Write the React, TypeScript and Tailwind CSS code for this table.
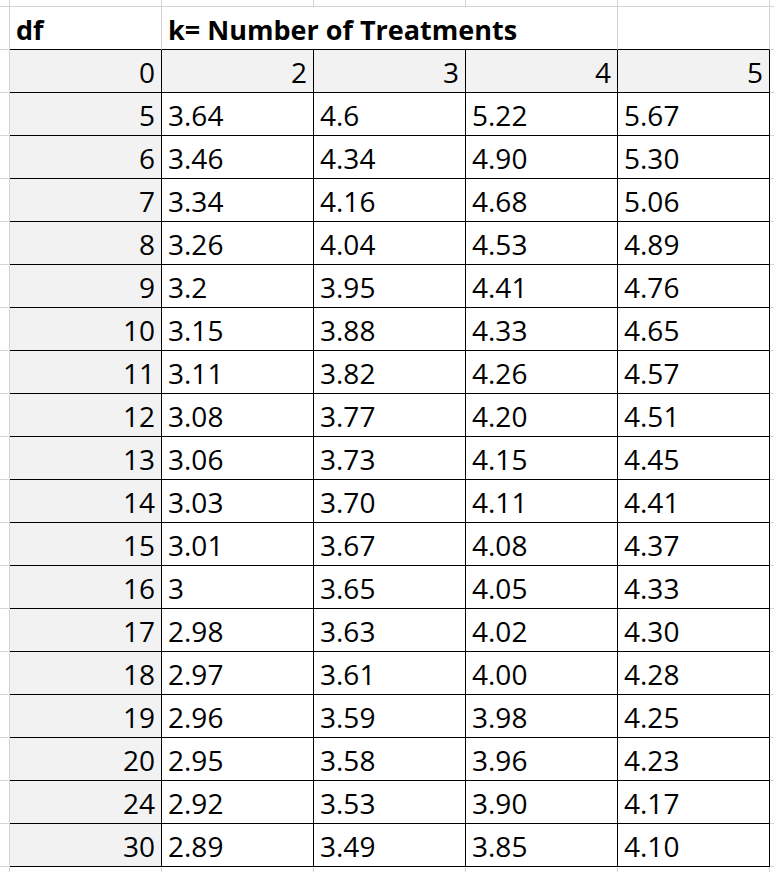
const rows: [string, string, string, string, string][] = [
  ["5", "3.64", "4.6", "5.22", "5.67"],
  ["6", "3.46", "4.34", "4.90", "5.30"],
  ["7", "3.34", "4.16", "4.68", "5.06"],
  ["8", "3.26", "4.04", "4.53", "4.89"],
  ["9", "3.2", "3.95", "4.41", "4.76"],
  ["10", "3.15", "3.88", "4.33", "4.65"],
  ["11", "3.11", "3.82", "4.26", "4.57"],
  ["12", "3.08", "3.77", "4.20", "4.51"],
  ["13", "3.06", "3.73", "4.15", "4.45"],
  ["14", "3.03", "3.70", "4.11", "4.41"],
  ["15", "3.01", "3.67", "4.08", "4.37"],
  ["16", "3", "3.65", "4.05", "4.33"],
  ["17", "2.98", "3.63", "4.02", "4.30"],
  ["18", "2.97", "3.61", "4.00", "4.28"],
  ["19", "2.96", "3.59", "3.98", "4.25"],
  ["20", "2.95", "3.58", "3.96", "4.23"],
  ["24", "2.92", "3.53", "3.90", "4.17"],
  ["30", "2.89", "3.49", "3.85", "4.10"],
];

const grid = "border-[#d4d4d4]";

function Margin({ bottom = true }: { bottom?: boolean }) {
  return (
    <div
      className={`w-[10px] shrink-0 border-r ${bottom ? "border-b" : ""} ${grid}`}
    />
  );
}

function Tail({ bottom = true }: { bottom?: boolean }) {
  return <div className={`flex-1 ${bottom ? "border-b" : ""} ${grid}`} />;
}

export default function App() {
  return (
    <div
      className="w-[774px] h-[872px] bg-white overflow-hidden flex flex-col text-black"
      style={{ fontFamily: '"Open Sans", "Liberation Sans", sans-serif' }}
    >
      {/* strip of the row above */}
      <div className="flex h-[7px] shrink-0">
        <Margin />
        {[0, 1, 2, 3, 4].map((i) => (
          <div key={i} className={`w-[152px] shrink-0 border-r border-b ${grid}`} />
        ))}
        <Tail />
      </div>

      {/* title row */}
      <div className="flex h-[43px] shrink-0 text-[27px] font-bold leading-[43px]">
        <Margin />
        <div className={`w-[152px] shrink-0 border-r ${grid} border-b-black border-b pl-[6px] pt-[1px]`}>
          df
        </div>
        <div className="w-[152px] shrink-0 border-b border-black pl-[6px] pt-[1px] whitespace-nowrap relative z-10">
          k= Number of Treatments
        </div>
        <div className="w-[152px] shrink-0 border-b border-black" />
        <div className={`w-[152px] shrink-0 border-r ${grid} border-b border-b-black`} />
        <div className={`w-[152px] shrink-0 border-r ${grid} border-b border-b-black`} />
        <Tail />
      </div>

      {/* k header row */}
      <div className="flex h-[43px] shrink-0 text-[28px] leading-[43px]">
        <Margin />
        {["0", "2", "3", "4", "5"].map((v, i) => (
          <div
            key={i}
            className="w-[152px] shrink-0 border-r border-b border-black bg-[#f2f2f2] text-right pr-[6px] pt-[1px]"
          >
            {v}
          </div>
        ))}
        <Tail />
      </div>

      {rows.map((r) => (
        <div key={r[0]} className="flex h-[43px] shrink-0 text-[28px] leading-[43px]">
          <Margin />
          <div className="w-[152px] shrink-0 border-r border-b border-black bg-[#f2f2f2] text-right pr-[6px] pt-[1px]">
            {r[0]}
          </div>
          {r.slice(1).map((v, i) => (
            <div
              key={i}
              className="w-[152px] shrink-0 border-r border-b border-black pl-[6px] pt-[1px]"
            >
              {v}
            </div>
          ))}
          <Tail />
        </div>
      ))}

      {/* strip of the row below */}
      <div className="flex flex-1">
        <Margin bottom={false} />
        {[0, 1, 2, 3, 4].map((i) => (
          <div key={i} className={`w-[152px] shrink-0 border-r ${grid}`} />
        ))}
        <Tail bottom={false} />
      </div>
    </div>
  );
}
